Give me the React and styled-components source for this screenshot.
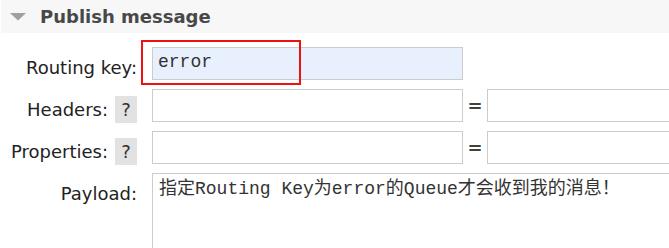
import React from "react";
import styled, { createGlobalStyle } from "styled-components";

const Global = createGlobalStyle`
  html, body { margin: 0; padding: 0; background: #fff; overflow: hidden; }
  body { font-family: "DejaVu Sans", Verdana, sans-serif; color: #333; }
`;

const Section = styled.section`
  width: 669px;
`;

const Header = styled.div`
  height: 33px;
  margin-left: 1px;
  background: #f7f7f7;
  display: flex;
  align-items: center;
  gap: 14px;
  padding-left: 9px;
`;

const Title = styled.h2`
  margin: 0;
  font-family: "DejaVu Sans", Verdana, sans-serif;
  font-weight: bold;
  font-size: 18px;
  line-height: 21px;
  color: #484848;
`;

const Form = styled.div`
  display: grid;
  grid-template-columns: 152px 311px 24px 320px;
  row-gap: 8px;
  margin-top: 14px;
  width: 900px;
`;

const Label = styled.div`
  grid-column: 1;
  box-sizing: content-box;
  padding: 7px 15px 0 0;
  height: 27px;
  display: flex;
  align-items: center;
  justify-content: flex-end;
  gap: 7px;
  font-size: 18px;
  line-height: 21px;
  color: #222;
  white-space: nowrap;
`;

const Help = styled.span`
  display: inline-flex;
  align-items: center;
  justify-content: center;
  width: 22px;
  height: 27px;
  background: #e2e2e2;
  color: #333;
  font-size: 18px;
`;

const FieldWrap = styled.div`
  grid-column: 2;
  position: relative;
`;

const TextInput = styled.input`
  box-sizing: border-box;
  display: block;
  width: ${(p) => (p.$wide ? "320px" : "311px")};
  height: 33px;
  margin: 0;
  padding: 0 5px 4px;
  border: 1px solid #ccc;
  border-radius: 0;
  outline: none;
  background: ${(p) => (p.$filled ? "#e8f0fe" : "#fff")};
  font-family: "Liberation Mono", "Courier New", monospace;
  font-size: 18px;
  color: #333;
`;

const Equals = styled.div`
  grid-column: 3;
  height: 33px;
  display: flex;
  align-items: center;
  justify-content: center;
  font-size: 18px;
  font-weight: bold;
  color: #404040;
`;

const ValueCell = styled.div`
  grid-column: 4;
`;

const Highlight = styled.div`
  position: absolute;
  left: -11px;
  top: -7px;
  width: 160px;
  height: 45px;
  box-sizing: border-box;
  border: 2px solid #ee1111;
  pointer-events: none;
`;

const PayloadWrap = styled.div`
  grid-column: 2 / span 3;
`;

const Payload = styled.textarea`
  box-sizing: border-box;
  display: block;
  width: 640px;
  height: 140px;
  margin: 0;
  padding: 4px 6px;
  border: 1px solid #ccc;
  border-radius: 0;
  outline: none;
  resize: none;
  font-family: "Liberation Mono", "Noto Sans CJK SC", monospace;
  font-size: 18px;
  line-height: 22px;
  color: #333;
`;

const Triangle = () => (
  <svg width="16" height="8" viewBox="0 0 16 8">
    <polygon points="0,0 16,0 8,7.5" fill="#a0a0a0" />
  </svg>
);

export default function App() {
  return (
    <>
      <Global />
      <Section>
        <Header>
          <Triangle />
          <Title>Publish message</Title>
        </Header>
        <Form>
          <Label>Routing key:</Label>
          <FieldWrap>
            <TextInput $filled defaultValue="error" />
            <Highlight />
          </FieldWrap>

          <Label>
            Headers: <Help>?</Help>
          </Label>
          <FieldWrap>
            <TextInput />
          </FieldWrap>
          <Equals>=</Equals>
          <ValueCell>
            <TextInput $wide />
          </ValueCell>

          <Label>
            Properties: <Help>?</Help>
          </Label>
          <FieldWrap>
            <TextInput />
          </FieldWrap>
          <Equals>=</Equals>
          <ValueCell>
            <TextInput $wide />
          </ValueCell>

          <Label>Payload:</Label>
          <PayloadWrap>
            <Payload defaultValue="指定Routing Key为error的Queue才会收到我的消息！" />
          </PayloadWrap>
        </Form>
      </Section>
    </>
  );
}
